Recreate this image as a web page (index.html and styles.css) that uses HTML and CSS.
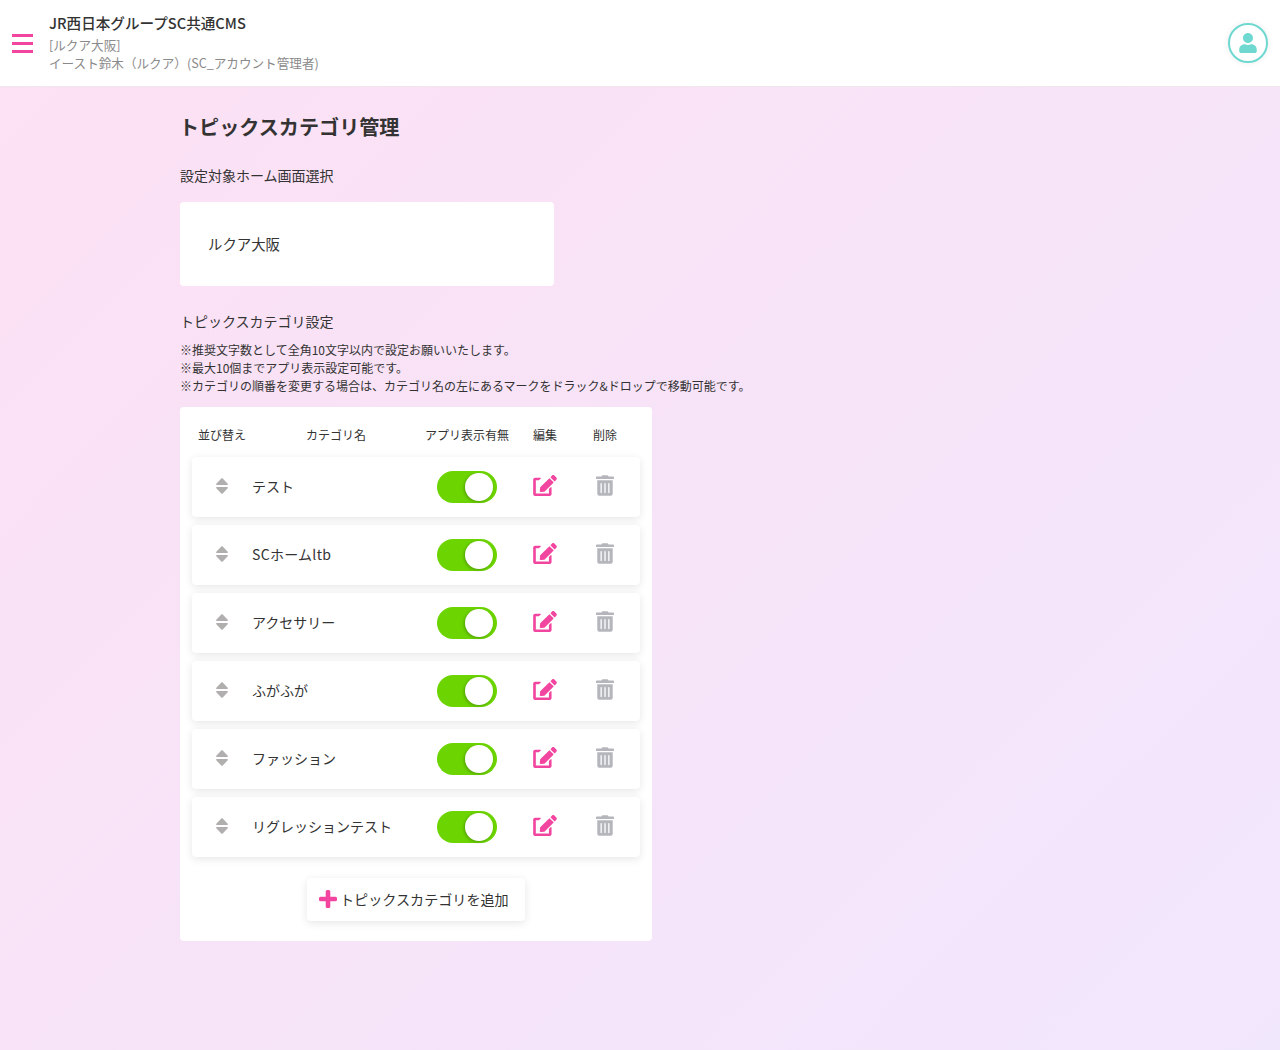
FILE: index.html
```html
<!DOCTYPE html>
<html lang="ja">
<head>
<meta charset="utf-8">
<title>トピックスカテゴリ管理</title>
<link rel="stylesheet" href="styles.css">
</head>
<body>
<svg class="defs" aria-hidden="true">
  <symbol id="i-sort" viewBox="0 0 12 16"><path d="M5.300.4a1 1 0 0 1 1.400 0l5 5.300c.6.6.2 1.300-.7 1.300H1C.1 7-.3 6.300.3 5.700zM1 9h10c.9 0 1.300.7.7 1.300l-5 5.300a1 1 0 0 1-1.400 0l-5-5.300C-.3 9.700.1 9 1 9z"/></symbol>
  <symbol id="i-edit" viewBox="0 0 576 512"><path d="M402.600 83.200l90.200 90.200c3.800 3.800 3.800 10 0 13.800L274.400 405.600l-92.800 10.300c-12.400 1.400-22.900-9.100-21.500-21.500l10.300-92.800L388.800 83.200c3.800-3.800 10-3.800 13.800 0zm162-22.900l-48.800-48.800c-15.200-15.200-39.900-15.200-55.200 0l-35.400 35.400c-3.800 3.800-3.800 10 0 13.800l90.200 90.200c3.800 3.800 10 3.800 13.800 0l35.400-35.400c15.200-15.300 15.200-40 0-55.200zM384 346.200V448H64V128h73.100c3.200 0 6.200-1.300 8.500-3.500l40-40c7.600-7.600 2.200-20.500-8.500-20.500H48C21.500 64 0 85.500 0 112v352c0 26.500 21.500 48 48 48h352c26.500 0 48-21.500 48-48V306.200c0-10.700-12.900-16-20.500-8.500l-40 40c-2.200 2.300-3.500 5.300-3.500 8.500z"/></symbol>
  <symbol id="i-trash" viewBox="0 0 448 512"><path d="M32 464a48 48 0 0 0 48 48h288a48 48 0 0 0 48-48V128H32zm272-256a16 16 0 0 1 32 0v224a16 16 0 0 1-32 0zm-96 0a16 16 0 0 1 32 0v224a16 16 0 0 1-32 0zm-96 0a16 16 0 0 1 32 0v224a16 16 0 0 1-32 0zM432 32H312l-9.400-18.700A24 24 0 0 0 281.100 0H166.800a23.720 23.720 0 0 0-21.400 13.300L136 32H16A16 16 0 0 0 0 48v32a16 16 0 0 0 16 16h416a16 16 0 0 0 16-16V48a16 16 0 0 0-16-16z"/></symbol>
</svg>
<header class="topbar">
  <button class="menu" aria-label="menu"><span></span><span></span><span></span></button>
  <div class="brand">
    <div class="brand-title">JR西日本グループSC共通CMS</div>
    <div class="brand-sub">[ルクア大阪]</div>
    <div class="brand-sub">イースト鈴木（ルクア）(SC_アカウント管理者)</div>
  </div>
  <div class="avatar">
    <svg viewBox="0 0 448 512" class="avatar-icon"><path d="M224 256c70.700 0 128-57.300 128-128S294.700 0 224 0 96 57.300 96 128s57.300 128 128 128zm89.600 32h-16.700c-22.200 10.200-46.900 16-72.900 16s-50.600-5.800-72.900-16h-16.700C60.200 288 0 348.200 0 422.400V464c0 26.500 21.500 48 48 48h352c26.500 0 48-21.500 48-48v-41.600c0-74.200-60.200-134.400-134.400-134.400z"/></svg>
  </div>
</header>
<main class="page">
  <h1 class="title">トピックスカテゴリ管理</h1>
  <p class="label">設定対象ホーム画面選択</p>
  <div class="select-box">ルクア大阪</div>
  <p class="label label-second">トピックスカテゴリ設定</p>
  <div class="notes">
    <div>※推奨文字数として全角10文字以内で設定お願いいたします。</div>
    <div>※最大10個までアプリ表示設定可能です。</div>
    <div>※カテゴリの順番を変更する場合は、カテゴリ名の左にあるマークをドラック&amp;ドロップで移動可能です。</div>
  </div>
  <section class="card">
    <div class="head">
      <span class="c-sort">並び替え</span>
      <span class="c-name">カテゴリ名</span>
      <span class="c-app">アプリ表示有無</span>
      <span class="c-edit">編集</span>
      <span class="c-del">削除</span>
    </div>
    <div class="rows">
      <div class="row">
        <span class="sort"><svg><use href="#i-sort"/></svg></span>
        <span class="name">テスト</span>
        <span class="switch"><i></i></span>
        <span class="edit"><svg><use href="#i-edit"/></svg></span>
        <span class="del"><svg><use href="#i-trash"/></svg></span>
      </div>
      <div class="row">
        <span class="sort"><svg><use href="#i-sort"/></svg></span>
        <span class="name name-latin">SCホームltb</span>
        <span class="switch"><i></i></span>
        <span class="edit"><svg><use href="#i-edit"/></svg></span>
        <span class="del"><svg><use href="#i-trash"/></svg></span>
      </div>
      <div class="row">
        <span class="sort"><svg><use href="#i-sort"/></svg></span>
        <span class="name">アクセサリー</span>
        <span class="switch"><i></i></span>
        <span class="edit"><svg><use href="#i-edit"/></svg></span>
        <span class="del"><svg><use href="#i-trash"/></svg></span>
      </div>
      <div class="row">
        <span class="sort"><svg><use href="#i-sort"/></svg></span>
        <span class="name">ふがふが</span>
        <span class="switch"><i></i></span>
        <span class="edit"><svg><use href="#i-edit"/></svg></span>
        <span class="del"><svg><use href="#i-trash"/></svg></span>
      </div>
      <div class="row">
        <span class="sort"><svg><use href="#i-sort"/></svg></span>
        <span class="name">ファッション</span>
        <span class="switch"><i></i></span>
        <span class="edit"><svg><use href="#i-edit"/></svg></span>
        <span class="del"><svg><use href="#i-trash"/></svg></span>
      </div>
      <div class="row">
        <span class="sort"><svg><use href="#i-sort"/></svg></span>
        <span class="name">リグレッションテスト</span>
        <span class="switch"><i></i></span>
        <span class="edit"><svg><use href="#i-edit"/></svg></span>
        <span class="del"><svg><use href="#i-trash"/></svg></span>
      </div>
    </div>
    <div class="add-wrap">
      <button class="add"><svg viewBox="0 0 18 18"><path d="M6.700 1.500a1.500 1.500 0 0 1 1.500-1.500h1.600a1.500 1.500 0 0 1 1.500 1.500v5.200h5.200A1.500 1.500 0 0 1 18 8.200v1.600a1.500 1.500 0 0 1-1.500 1.500h-5.200v5.200a1.500 1.500 0 0 1-1.500 1.500H8.200a1.500 1.500 0 0 1-1.500-1.500v-5.200H1.500A1.500 1.500 0 0 1 0 9.800V8.200a1.500 1.500 0 0 1 1.500-1.500h5.200z"/></svg><span>トピックスカテゴリを追加</span></button>
    </div>
  </section>
</main>
</body>
</html>
```

FILE: styles.css
```css
* { box-sizing: border-box; }
html, body { margin: 0; padding: 0; }
body {
  width: 1280px;
  min-height: 1050px;
  font-family: "Noto Sans CJK JP", "Noto Sans", sans-serif;
  color: #333;
  background: linear-gradient(135deg, #fde0f3 0%, #f1e7fd 100%);
}
.defs { display: none; }
.topbar {
  height: 87px;
  background: #fff;
  border-bottom: 1px solid #eee6ec;
  display: flex;
  align-items: center;
  padding: 0 12px;
}
.menu {
  width: 21px;
  height: 19px;
  padding: 0;
  border: 0;
  background: none;
  display: flex;
  flex-direction: column;
  justify-content: space-between;
  margin-right: 16px;
}
.menu span { display: block; height: 3px; background: #f2459f; }
.brand { flex: 1; padding-bottom: 1px; }
.brand-title { font-size: 14.6px; line-height: 20px; font-weight: 500; color: #333; margin-bottom: 3px; }
.brand-sub { font-size: 12.6px; line-height: 18px; color: #8a8a8a; }
.avatar {
  width: 40px;
  height: 40px;
  border: 2px solid #6fd8d0;
  border-radius: 50%;
  display: flex;
  align-items: center;
  justify-content: center;
  box-shadow: 0 0 6px rgba(0,0,0,.08);
}
.avatar-icon { width: 18px; height: 20px; fill: #6fd8d0; }
.page { padding: 0 0 0 180px; }
.title { margin: 25px 0 0 -1px; font-size: 20.1px; line-height: 30px; font-weight: 700; color: #333; }
.label { margin: 23px 0 0; font-size: 14px; line-height: 20px; color: #333; }
.select-box {
  width: 374px;
  height: 84px;
  margin-top: 17px;
  padding: 0 0 2px 28px;
  display: flex;
  align-items: center;
  background: #fff;
  border-radius: 4px;
  font-size: 14.4px;
}
.label-second { margin-top: 25px; }
.notes { margin-top: 10px; font-size: 12px; line-height: 18px; color: #333; }
.card {
  width: 472px;
  margin-top: 12px;
  padding: 19px 12px 20px;
  background: #fff;
  border-radius: 4px;
}
.head { height: 31px; font-size: 12px; line-height: 18px; display: flex; }
.head span { display: block; }
.c-sort { width: 114px; padding-left: 6px; }
.c-name { width: 119px; }
.c-app { width: 108px; }
.c-edit { width: 60px; }
.rows { display: flex; flex-direction: column; gap: 8px; }
.row {
  height: 60px;
  display: flex;
  align-items: center;
  background: #fff;
  border-radius: 4px;
  box-shadow: 0 2px 8px rgba(0,0,0,.1);
}
.sort { width: 60px; padding-left: 24px; display: flex; margin-top: -3px; }
.sort svg { width: 12px; height: 16px; fill: #b1aeae; }
.name { width: 185px; font-size: 14px; color: #333; margin-top: -2px; }
.name-latin { letter-spacing: .3px; }
.switch {
  width: 60px;
  height: 32px;
  border-radius: 16px;
  background: #6cd400;
  display: flex;
  align-items: center;
  justify-content: flex-end;
  padding-right: 4px;
}
.switch i { display: block; width: 28px; height: 28px; border-radius: 50%; background: #fff; box-shadow: -1px 1px 3px rgba(0,0,0,.25); }
.edit { width: 24px; margin-left: 36px; display: flex; margin-top: -3px; }
.edit svg { width: 24px; height: 21px; fill: #f2459f; }
.del { width: 18px; margin-left: 39px; display: flex; margin-top: -3px; }
.del svg { width: 18px; height: 21px; fill: #b4b6bc; }
.add-wrap { display: flex; justify-content: center; margin-top: 21px; }
.add {
  width: 218px;
  height: 43px;
  display: flex;
  align-items: center;
  gap: 3px;
  padding: 0 0 2px 12px;
  border: 0;
  border-radius: 4px;
  background: #fff;
  box-shadow: 0 2px 8px rgba(0,0,0,.1);
  font-family: inherit;
  font-size: 14.1px;
  color: #333;
}
.add svg { width: 18px; height: 18px; fill: #f2459f; }
```
